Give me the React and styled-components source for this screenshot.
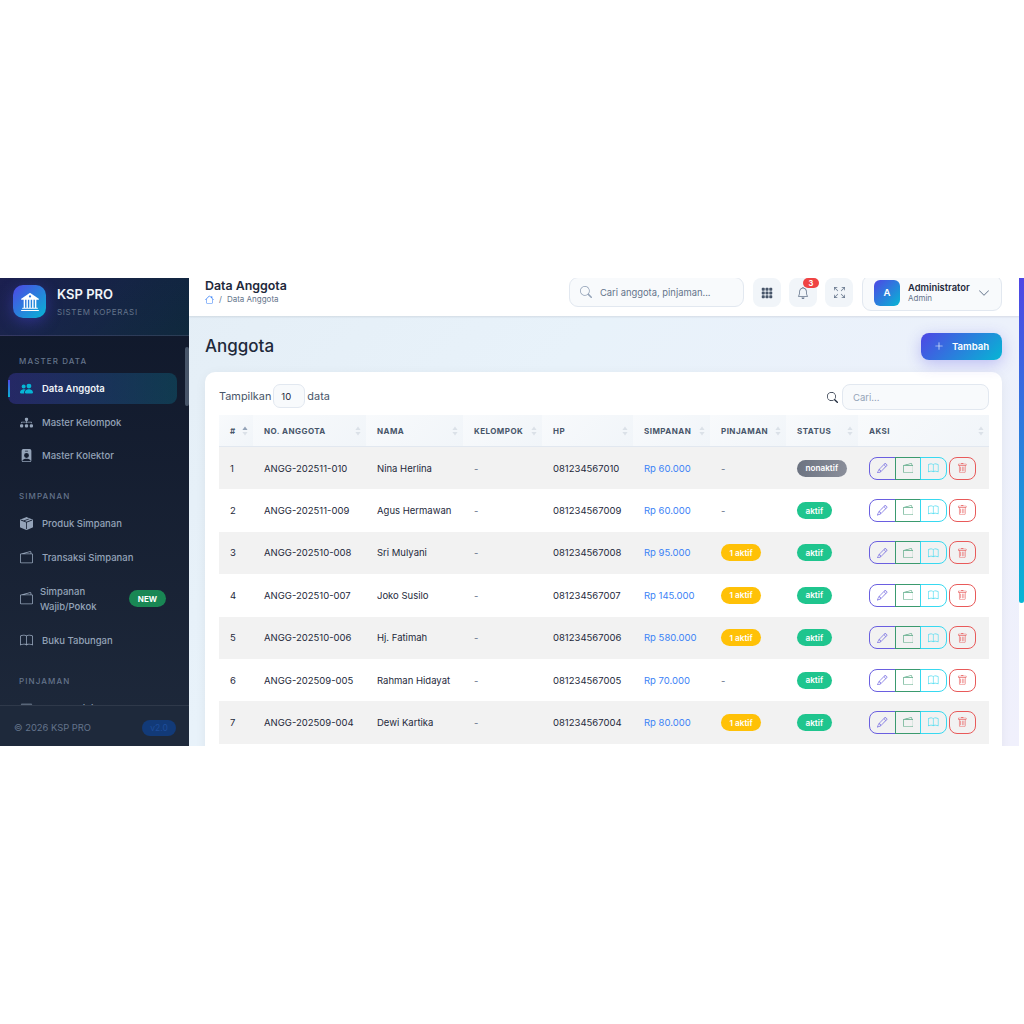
import React from "react";
import styled, { createGlobalStyle } from "styled-components";
import {
  BsBank2, BsPeopleFill, BsDiagram3Fill, BsPersonBadgeFill, BsBoxSeamFill, BsWallet2, BsBook, BsCashStack,
  BsHouse, BsSearch, BsGrid3X3GapFill, BsBell, BsArrowsFullscreen, BsChevronDown, BsPlusLg, BsPencil, BsTrash,
} from "react-icons/bs";

const Global = createGlobalStyle`
  html, body { margin: 0; padding: 0; background: #fff; }
  * { box-sizing: border-box; }
  body { font-family: Inter, "Liberation Sans", sans-serif; }
`;

const Stage = styled.div`
  height: 1024px;
  display: flex;
  align-items: center;
  justify-content: center;
  background: #fff;
`;
const Frame = styled.div`
  width: 1024px;
  height: 468px;
  display: flex;
  overflow: hidden;
  background: #fff;
`;

/* Sidebar */
const Sidebar = styled.aside`
  width: 189px;
  flex: none;
  display: flex;
  flex-direction: column;
  position: relative;
  background: linear-gradient(180deg, #0f172a 0%, #1e293b 100%);
`;
const Brand = styled.div`
  height: 58px;
  flex: none;
  display: flex;
  align-items: flex-start;
  gap: 11px;
  padding: 7px 13px 0;
  background: linear-gradient(135deg, rgba(79, 70, 229, 0.2), rgba(6, 182, 212, 0.1));
  border-bottom: 1px solid rgba(255, 255, 255, 0.1);
`;
const Logo = styled.div`
  width: 33px;
  height: 33px;
  flex: none;
  border-radius: 10px;
  display: flex;
  align-items: center;
  justify-content: center;
  color: #fff;
  font-size: 18px;
  background: linear-gradient(135deg, #4f46e5, #06b6d4);
  box-shadow: 0 4px 15px rgba(79, 70, 229, 0.4);
`;
const BrandText = styled.div`
  display: flex;
  flex-direction: column;
  padding-top: 1px;
`;
const BrandName = styled.div`
  font-size: 13px;
  font-weight: 600;
  line-height: 17px;
  color: #f1f5f9;
`;
const BrandSub = styled.div`
  font-size: 8px;
  letter-spacing: 0.65px;
  line-height: 12px;
  margin-top: 3px;
  color: #64748b;
`;
const Nav = styled.nav`
  flex: 1;
  min-height: 0;
  overflow: hidden;
  padding: 19px 12px 0 8px;
`;
const NavThumb = styled.div`
  position: absolute;
  right: 0;
  top: 69px;
  width: 4px;
  height: 59px;
  border-radius: 2px;
  background: #475569;
`;
const Section = styled.div`
  font-size: 8px;
  font-weight: 500;
  letter-spacing: 1.1px;
  line-height: 12px;
  color: #64748b;
  padding-left: 11px;
  margin: ${(p) => (p.$first ? "0 0 6px" : "19px 0 6px")};
`;
const NavItem = styled.div`
  position: relative;
  height: ${(p) => (p.$tall ? "47px" : "31px")};
  margin-bottom: 2.5px;
  display: flex;
  align-items: center;
  gap: 9px;
  padding-left: 12px;
  padding-right: 11px;
  border-radius: 8px;
  font-size: 9.5px;
  font-weight: ${(p) => (p.$active ? 600 : 500)};
  color: ${(p) => (p.$active ? "#f1f5f9" : "#94a3b8")};
  background: ${(p) =>
    p.$active
      ? "linear-gradient(90deg, rgba(79,70,229,0.3), rgba(6,182,212,0.2))"
      : "transparent"};
  svg { flex: none; font-size: 13px; color: ${(p) => (p.$active ? "#06b6d4" : "#94a3b8")}; }
  &::before {
    content: "";
    display: ${(p) => (p.$active ? "block" : "none")};
    position: absolute;
    left: 0;
    top: 7px;
    bottom: 7px;
    width: 1.5px;
    background: linear-gradient(180deg, #4f46e5, #06b6d4);
  }
`;
const TallLabel = styled.span`
  flex: 1;
  line-height: 15px;
  margin-left: -2px;
`;
const NewBadge = styled.span`
  width: 37px;
  height: 17px;
  border-radius: 9px;
  display: flex;
  align-items: center;
  justify-content: center;
  font-size: 8px;
  font-weight: 700;
  color: #fff;
  background: #198754;
`;
const SideFoot = styled.div`
  height: 41px;
  flex: none;
  display: flex;
  align-items: center;
  justify-content: space-between;
  padding: 3px 13px 0 14px;
  background: #1e293b;
  border-top: 1px solid rgba(255, 255, 255, 0.08);
  font-size: 9.4px;
  color: #64748b;
`;
const Version = styled.span`
  width: 34px;
  height: 16px;
  border-radius: 8px;
  display: flex;
  align-items: center;
  justify-content: center;
  font-size: 8.5px;
  color: #1e4d9b;
  background: #123a78;
`;

/* Main */
const Main = styled.main`
  flex: 1;
  min-width: 0;
  display: flex;
  flex-direction: column;
  background: linear-gradient(135deg, #e4eef6 0%, #e8f2fa 35%, #f0f0fc 100%);
`;
const TopBar = styled.header`
  height: 38px;
  flex: none;
  display: flex;
  align-items: center;
  padding: 0 17px 0 16px;
  background: #fff;
  box-shadow: 0 1px 2px rgba(15, 23, 42, 0.1);
`;
const Crumbs = styled.div`
  flex: 1;
  align-self: flex-start;
  padding-top: 1px;
`;
const PageTitle = styled.div`
  font-size: 12.4px;
  font-weight: 600;
  line-height: 14px;
  color: #1e293b;
`;
const Crumb = styled.div`
  display: flex;
  align-items: center;
  gap: 5px;
  margin-top: 1px;
  font-size: 8px;
  line-height: 11px;
  color: #64748b;
  svg { font-size: 9px; color: #3b82f6; }
`;
const TopSearch = styled.div`
  width: 175px;
  height: 30px;
  margin-top: -10px;
  margin-right: 9px;
  display: flex;
  align-items: center;
  gap: 8px;
  padding-left: 10px;
  background: #f8fafc;
  border: 1px solid #e2e8f0;
  border-radius: 9px;
  font-size: 9.4px;
  color: #64748b;
  svg { font-size: 12px; color: #94a3b8; }
`;
const IconBtn = styled.div`
  position: relative;
  width: 28px;
  height: 29px;
  margin-top: -9px;
  margin-right: 8px;
  border-radius: 8px;
  background: #f1f5f9;
  display: flex;
  align-items: center;
  justify-content: center;
  color: ${(p) => p.$color || "#475569"};
  font-size: ${(p) => p.$size || 12}px;
`;
const Count = styled.span`
  position: absolute;
  top: 0;
  right: -2px;
  width: 16px;
  height: 10px;
  border-radius: 6px;
  background: #ef4444;
  color: #fff;
  font-size: 7.5px;
  font-weight: 700;
  display: flex;
  align-items: center;
  justify-content: center;
`;
const User = styled.div`
  width: 140px;
  height: 36px;
  margin-top: -9px;
  margin-left: 1px;
  display: flex;
  align-items: center;
  padding: 0 11px;
  background: #f8fafc;
  border: 1px solid #e2e8f0;
  border-radius: 9px;
`;
const Avatar = styled.div`
  width: 26px;
  height: 26px;
  flex: none;
  border-radius: 6px;
  display: flex;
  align-items: center;
  justify-content: center;
  color: #fff;
  font-size: 9.6px;
  font-weight: 600;
  background: linear-gradient(135deg, #4f46e5, #06b6d4);
`;
const UserText = styled.div`
  flex: 1;
  margin-left: 8px;
`;
const UserName = styled.div`
  font-size: 9.4px;
  font-weight: 600;
  line-height: 11px;
  color: #1e293b;
`;
const UserRole = styled.div`
  font-size: 8px;
  line-height: 11px;
  color: #64748b;
`;
const Content = styled.div`
  flex: 1;
  min-height: 0;
  overflow: hidden;
  padding: 17px 17px 0 16px;
`;
const ContentHead = styled.div`
  display: flex;
  align-items: center;
  justify-content: space-between;
  height: 26px;
  margin-bottom: 13px;
`;
const Heading = styled.h1`
  margin: 0;
  font-size: 17px;
  font-weight: 500;
  color: #1e293b;
`;
const AddBtn = styled.div`
  width: 81px;
  height: 27px;
  display: flex;
  align-items: center;
  justify-content: center;
  gap: 8px;
  border-radius: 8px;
  color: #fff;
  font-size: 9.6px;
  font-weight: 600;
  background: linear-gradient(135deg, #4f46e5, #06b6d4);
  box-shadow: 0 4px 15px rgba(79, 70, 229, 0.3);
  svg { font-size: 10px; }
`;
const Card = styled.section`
  min-height: 400px;
  background: #fff;
  border-radius: 10px 10px 0 0;
  padding: 12px 13px 0 14px;
  box-shadow: 0 2px 12px rgba(15, 23, 42, 0.05);
`;
const CardTools = styled.div`
  display: flex;
  align-items: flex-start;
  justify-content: space-between;
  height: 31px;
`;
const Show = styled.div`
  display: flex;
  align-items: center;
  gap: 2px;
  font-size: 10.9px;
  color: #475569;
`;
const PerPage = styled.span`
  width: 32px;
  height: 24px;
  padding-left: 7px;
  display: flex;
  align-items: center;
  font-size: 9.5px;
  color: #1e293b;
  background: #f8fafc;
  border: 1px solid #e2e8f0;
  border-radius: 7px;
`;
const Find = styled.div`
  display: flex;
  align-items: center;
  gap: 4px;
  svg { font-size: 11px; color: #1e293b; }
`;
const FindBox = styled.div`
  width: 147px;
  height: 26px;
  padding-left: 10px;
  display: flex;
  align-items: center;
  font-size: 9.5px;
  color: #94a3b8;
  background: #f8fafc;
  border: 1px solid #e2e8f0;
  border-radius: 8px;
`;
const columns = "34px 113px 97px 79px 91px 77px 76px 72px 131px";
const HeadRow = styled.div`
  display: grid;
  grid-template-columns: ${columns};
  height: 32px;
  border-bottom: 1px solid #e2e8f0;
`;
const Th = styled.div`
  display: flex;
  align-items: center;
  justify-content: space-between;
  padding: 0 5px 0 11px;
  font-size: 8px;
  font-weight: 700;
  letter-spacing: 0.45px;
  color: #475569;
  background: linear-gradient(135deg, #f8fafc, #f1f5f9);
`;
const Sort = styled.svg`
  width: 6px;
  height: 10px;
  flex: none;
`;
const Row = styled.div`
  display: grid;
  grid-template-columns: ${columns};
  height: 42.4px;
  align-items: center;
  background: ${(p) => (p.$odd ? "#f2f2f2" : "#fff")};
`;
const Td = styled.div`
  padding-left: 11px;
  font-size: 9.5px;
  color: ${(p) => (p.$muted ? "#64748b" : "#1e293b")};
  white-space: nowrap;
`;
const Money = styled(Td)`
  color: #3b82f6;
`;
const Pill = styled.span`
  display: inline-flex;
  align-items: center;
  height: 17px;
  padding: 0 8.5px;
  border-radius: 9px;
  font-size: 8.2px;
  font-weight: 600;
  color: #fff;
  background: ${(p) => p.$bg};
`;
const Actions = styled.div`
  display: flex;
  align-items: center;
  padding-left: 11px;
`;
const Group = styled.div`
  display: flex;
  margin-right: 2.3px;
`;
const ActBtn = styled.span`
  width: 26.7px;
  height: 23px;
  display: flex;
  align-items: center;
  justify-content: center;
  font-size: 10.5px;
  color: ${(p) => p.$c};
  border: 1px solid ${(p) => p.$c};
  margin-left: ${(p) => (p.$join ? "-1px" : 0)};
  border-radius: ${(p) => p.$r || "0"};
  svg { opacity: 0.85; }
`;
const Track = styled.div`
  width: 5px;
  flex: none;
  background: #fff;
`;
const Thumb = styled.div`
  height: 325px;
  border-radius: 0 0 3px 3px;
  background: linear-gradient(180deg, #4f46e5, #06b6d4);
`;

const SortIcon = ({ up }) => (
  <Sort viewBox="0 0 6 10">
    <path d="M3 0.5 L5.6 4 H0.4 Z" fill={up ? "#94a3b8" : "#dbe1e8"} />
    <path d="M3 9.5 L5.6 6 H0.4 Z" fill="#dbe1e8" />
  </Sort>
);

const heads = ["#", "NO. ANGGOTA", "NAMA", "KELOMPOK", "HP", "SIMPANAN", "PINJAMAN", "STATUS", "AKSI"];
const rows = [
  ["1", "ANGG-202511-010", "Nina Herlina", "081234567010", "Rp 60.000", false, "nonaktif"],
  ["2", "ANGG-202511-009", "Agus Hermawan", "081234567009", "Rp 60.000", false, "aktif"],
  ["3", "ANGG-202510-008", "Sri Mulyani", "081234567008", "Rp 95.000", true, "aktif"],
  ["4", "ANGG-202510-007", "Joko Susilo", "081234567007", "Rp 145.000", true, "aktif"],
  ["5", "ANGG-202510-006", "Hj. Fatimah", "081234567006", "Rp 580.000", true, "aktif"],
  ["6", "ANGG-202509-005", "Rahman Hidayat", "081234567005", "Rp 70.000", false, "aktif"],
  ["7", "ANGG-202509-004", "Dewi Kartika", "081234567004", "Rp 80.000", true, "aktif"],
];

export default function App() {
  return (
    <Stage>
      <Global />
      <Frame>
        <Sidebar>
          <Brand>
            <Logo><BsBank2 /></Logo>
            <BrandText>
              <BrandName>KSP PRO</BrandName>
              <BrandSub>SISTEM KOPERASI</BrandSub>
            </BrandText>
          </Brand>
          <Nav>
            <Section $first>MASTER DATA</Section>
            <NavItem $active><BsPeopleFill />Data Anggota</NavItem>
            <NavItem><BsDiagram3Fill />Master Kelompok</NavItem>
            <NavItem><BsPersonBadgeFill />Master Kolektor</NavItem>
            <Section>SIMPANAN</Section>
            <NavItem><BsBoxSeamFill />Produk Simpanan</NavItem>
            <NavItem><BsWallet2 />Transaksi Simpanan</NavItem>
            <NavItem $tall><BsWallet2 /><TallLabel>Simpanan Wajib/Pokok</TallLabel><NewBadge>NEW</NewBadge></NavItem>
            <NavItem><BsBook />Buku Tabungan</NavItem>
            <Section>PINJAMAN</Section>
            <NavItem><BsCashStack />Produk Pinjaman</NavItem>
          </Nav>
          <NavThumb />
          <SideFoot>
            <span>© 2026 KSP PRO</span>
            <Version>v2.0</Version>
          </SideFoot>
        </Sidebar>
        <Main>
          <TopBar>
            <Crumbs>
              <PageTitle>Data Anggota</PageTitle>
              <Crumb><BsHouse /><span>/</span><span>Data Anggota</span></Crumb>
            </Crumbs>
            <TopSearch><BsSearch />Cari anggota, pinjaman...</TopSearch>
            <IconBtn><BsGrid3X3GapFill /></IconBtn>
            <IconBtn $color="#64748b"><BsBell /><Count>3</Count></IconBtn>
            <IconBtn $size={11} $color="#64748b"><BsArrowsFullscreen /></IconBtn>
            <User>
              <Avatar>A</Avatar>
              <UserText>
                <UserName>Administrator</UserName>
                <UserRole>Admin</UserRole>
              </UserText>
              <BsChevronDown size={12} color="#64748b" />
            </User>
          </TopBar>
          <Content>
            <ContentHead>
              <Heading>Anggota</Heading>
              <AddBtn><BsPlusLg />Tambah</AddBtn>
            </ContentHead>
            <Card>
              <CardTools>
                <Show>Tampilkan <PerPage>10</PerPage> data</Show>
                <Find><BsSearch /><FindBox>Cari...</FindBox></Find>
              </CardTools>
              <HeadRow>
                {heads.map((h, i) => (
                  <Th key={h}>{h}<SortIcon up={i === 0} /></Th>
                ))}
              </HeadRow>
              {rows.map((r, i) => (
                <Row key={r[0]} $odd={i % 2 === 0}>
                  <Td>{r[0]}</Td>
                  <Td>{r[1]}</Td>
                  <Td>{r[2]}</Td>
                  <Td $muted>-</Td>
                  <Td>{r[3]}</Td>
                  <Money>{r[4]}</Money>
                  <Td $muted>{r[5] ? <Pill $bg="#ffc107">1 aktif</Pill> : "-"}</Td>
                  <Td>
                    <Pill $bg={r[6] === "aktif" ? "#1fc58e" : "linear-gradient(100deg, #6b7280, #8b8f9b)"}>{r[6]}</Pill>
                  </Td>
                  <Actions>
                    <Group>
                      <ActBtn $c="#6a5fe0" $r="8px 0 0 8px"><BsPencil /></ActBtn>
                      <ActBtn $c="#3a9a6f" $join><BsWallet2 /></ActBtn>
                      <ActBtn $c="#38d9f0" $join $r="0 8px 8px 0"><BsBook /></ActBtn>
                    </Group>
                    <ActBtn $c="#e85a5a" $r="8px"><BsTrash /></ActBtn>
                  </Actions>
                </Row>
              ))}
            </Card>
          </Content>
        </Main>
        <Track><Thumb /></Track>
      </Frame>
    </Stage>
  );
}
